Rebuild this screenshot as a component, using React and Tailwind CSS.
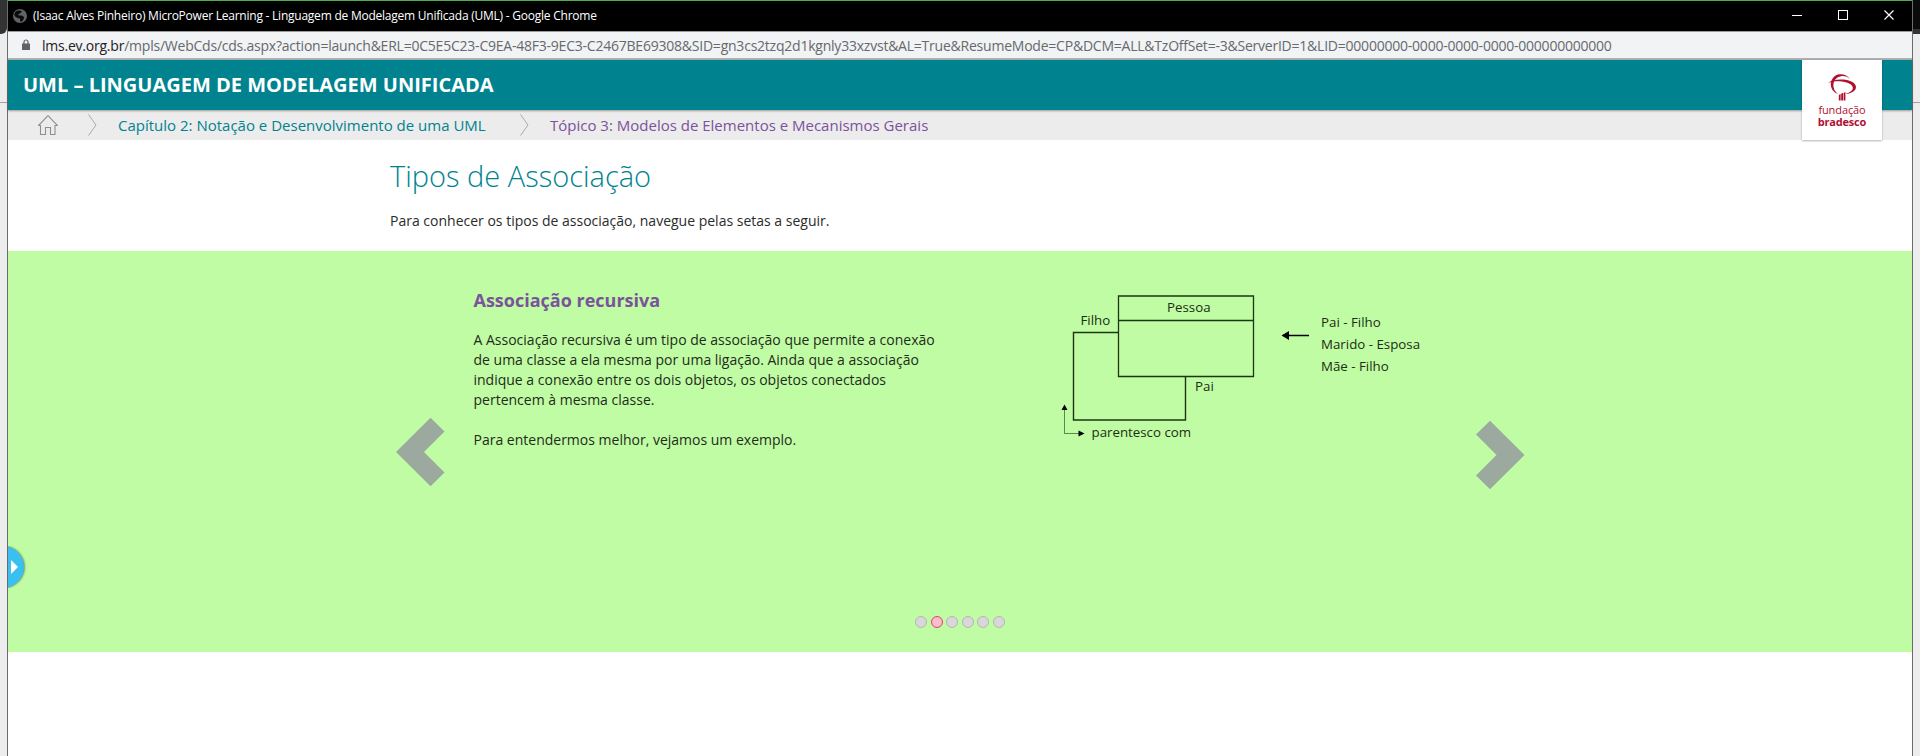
const dots = [0, 1, 2, 3, 4, 5];

function TitleBar() {
  return (
    <div className="flex h-8 items-center border-t border-b border-t-[#4caf50] border-b-[#9a9a9a] bg-black text-white">
      <svg className="ml-[5px] h-[14px] w-[14px] shrink-0" viewBox="0 0 12 12">
        <circle cx="6" cy="6" r="6" fill="#5f6368" />
        <path d="M2 2.500C4 1 7 1 7.500 2.500C6 4 4 4 5 5.500C7 5.500 9 5.500 9.500 7.500C9 10 7.500 11 6 11C6 9 7 8.500 5 8C3 7.500 1.500 6.500 1 5Z" fill="#0b0b0b" />
      </svg>
      <span className="ml-[6px] whitespace-nowrap text-[12px] tracking-[-0.235px]">
        (Isaac Alves Pinheiro) MicroPower Learning - Linguagem de Modelagem Unificada (UML) - Google Chrome
      </span>
      <div className="ml-auto flex">
        <svg className="h-[30px] w-[138px]" viewBox="0 0 138 30" fill="none" stroke="#fff" shapeRendering="crispEdges">
          <path d="M18 14.500H28" />
          <path d="M64.500 9.500H73.500V18.500H64.500Z" />
          <path d="M110.500 9.500L119.500 18.500M119.500 9.500L110.500 18.500" strokeWidth="1.2" shapeRendering="auto" />
        </svg>
      </div>
    </div>
  );
}

function AddressBar() {
  return (
    <div className="flex h-7 items-center border-b-2 border-[#b0b0b0] bg-[#f1f3f4]">
      <svg className="ml-[14px] h-3 w-2 shrink-0" viewBox="0 0 8 12">
        <path d="M0 4.500H8V11H0Z" fill="#5f6368" />
        <path d="M2 5V3A2 2 0 0 1 6 3V5" fill="none" stroke="#5f6368" strokeWidth="1.2" />
      </svg>
      <span className="ml-[12px] whitespace-nowrap text-[14px] tracking-[-0.225px] text-[#66696d]">
        <span className="text-[#202124]">lms.ev.org.br</span>
        /mpls/WebCds/cds.aspx?action=launch&amp;ERL=0C5E5C23-C9EA-48F3-9EC3-C2467BE69308&amp;SID=gn3cs2tzq2d1kgnly33xzvst&amp;AL=True&amp;ResumeMode=CP&amp;DCM=ALL&amp;TzOffSet=-3&amp;ServerID=1&amp;LID=00000000-0000-0000-0000-000000000000
      </span>
    </div>
  );
}

function Separator({ className }) {
  return (
    <svg className={className} viewBox="0 0 10 22" fill="none" stroke="#aaa">
      <path d="M0.500 0.500L8 11L0.500 21.500" />
    </svg>
  );
}

function Logo() {
  return (
    <div className="absolute top-0 right-[30px] flex h-20 w-20 flex-col items-center bg-white pt-[13px] text-[#b01030] shadow-[0_1px_2px_rgba(0,0,0,0.3)]">
      <svg className="h-[28px] w-[28px] shrink-0" viewBox="0 0 28 28" fill="#b01030">
        <path d="M22 6.200C20 2.500 15.500 0.800 11.500 1.200C6.500 1.700 3 6 2.800 11C2.700 15.500 5.500 19.500 10 21C6.800 18.500 5.300 15.500 5.400 12C5.500 7.500 8.500 4 13 3.200C16.500 2.700 20 3.800 22 6.200Z" />
        <path d="M0 10C4 6.800 10 6.200 15 6.600C22 7.200 27.500 9.500 28 14C28 18 23.500 20.300 17.500 21C22 19.500 25 17.500 24.800 14.800C24.500 11 19 9 13.500 8.500C8.500 8 4 8.500 0 10Z" />
        <path d="M10.800 22L12.600 21V27.500H10.800ZM13.200 20.800L15 19.800V27.500H13.200ZM15.600 20L17.400 19V27.500H15.600Z" />
      </svg>
      <span className="mt-[2px] text-[11px] leading-[14px] tracking-[-0.1px]">fundação</span>
      <span className="mt-[-2px] text-[11px] leading-[14px] font-bold tracking-[-0.2px]">bradesco</span>
    </div>
  );
}

function Header() {
  return (
    <header className="relative">
      <div className="relative flex h-[50px] items-center bg-[#00838f] pl-[15px] shadow-[0_1px_2px_rgba(0,0,0,0.35)]">
        <h1 className="text-[20px] font-bold whitespace-nowrap text-white">UML – LINGUAGEM DE MODELAGEM UNIFICADA</h1>
      </div>
      <nav className="flex h-[30px] items-center bg-[#ececec] text-[15px] whitespace-nowrap">
        <svg className="ml-[30px] h-5 w-5 shrink-0" viewBox="0 0 20 20" fill="none" stroke="#8f8f8f" strokeWidth="1.1">
          <path d="M0.500 10.500L10 0.700L19.500 10.500H17V19.500H12.500V12.500H7.500V19.500H2.500V10.500Z" />
        </svg>
        <Separator className="ml-[30px] h-[22px] w-[10px] shrink-0" />
        <span className="ml-[20px] w-[368px] text-[#00838f]">Capítulo 2: Notação e Desenvolvimento de uma UML</span>
        <Separator className="ml-[34px] h-[22px] w-[10px] shrink-0" />
        <span className="ml-[20px] text-[#7b529c]">Tópico 3: Modelos de Elementos e Mecanismos Gerais</span>
      </nav>
      <Logo />
    </header>
  );
}

function Diagram() {
  return (
    <svg className="h-[160px] w-[380px] shrink-0" viewBox="1060 290 380 160" fill="none" stroke="#1c3512" fontFamily="Open Sans, sans-serif" fontSize="13.3">
      <path d="M1118.500 296H1253.500V376.500H1118.500Z" strokeWidth="1.300" />
      <path d="M1118.500 320.500H1253.500" strokeWidth="1.600" />
      <path d="M1118.500 332.500H1073.500V420H1185.500V376.500" strokeWidth="1.400" />
      <path d="M1064.500 408V433.500H1079" strokeWidth="0.600" />
      <path d="M1283 335.500H1309" stroke="#000" strokeWidth="1.500" />
      <g fill="#000" stroke="none">
        <path d="M1281.500 335.500L1289 331V340ZM1064.500 404.500L1067.500 410H1061.500ZM1084.500 433.500L1078.500 430.500V436.500Z" />
      </g>
      <g fill="#1b2e13" stroke="none">
        <text x="1167" y="311.500">Pessoa</text>
        <text x="1080.500" y="325">Filho</text>
        <text x="1195" y="391">Pai</text>
        <text x="1091.500" y="437">parentesco com</text>
        <text x="1321" y="327">Pai - Filho</text>
        <text x="1321" y="349">Marido - Esposa</text>
        <text x="1321" y="371">Mãe - Filho</text>
      </g>
    </svg>
  );
}

function Carousel() {
  return (
    <section className="relative flex h-[401px] flex-col bg-[#c0fca4]">
      <div className="flex h-[350px] items-start pl-[388px]">
        <svg className="mt-[166px] h-[70px] w-[49px] shrink-0" viewBox="0 0 49 70" fill="#9ba99f">
          <path d="M0 35L34.500 0.700L48.500 14.500L28 35L48.500 55.500L34.500 69.300Z" />
        </svg>
        <div className="ml-[28.500px] w-[480.500px] shrink-0 pt-[37px]">
          <h3 className="text-[18px] leading-6 font-bold text-[#7b529c]">Associação recursiva</h3>
          <p className="mt-[18px] text-[14px] leading-5 text-[#1f2b1b]">
            A Associação recursiva é um tipo de associação que permite a conexão<br />
            de uma classe a ela mesma por uma ligação. Ainda que a associação<br />
            indique a conexão entre os dois objetos, os objetos conectados<br />
            pertencem à mesma classe.<br />
            <br />
            Para entendermos melhor, vejamos um exemplo.
          </p>
        </div>
        <div className="ml-[106px] pt-[39px]">
          <Diagram />
        </div>
        <svg className="mt-[169px] ml-[36px] h-[70px] w-[49px] shrink-0" viewBox="0 0 49 70" fill="#9ba99f">
          <path d="M48.500 35L14 0.700L0 14.500L20.500 35L0 55.500L14 69.300Z" />
        </svg>
      </div>
      <div className="flex gap-[3.6px] pt-[15px] pl-[907px]">
        {dots.map((i) => (
          <span key={i} className={i === 1 ? "h-3 w-3 rounded-full border border-[#e0406a] bg-[#fbbccb]" : "h-3 w-3 rounded-full border border-[#b5b5b5] bg-[#d8d8d8]"} />
        ))}
      </div>
      <div className="absolute top-[295px] left-0 h-[42px] w-[28px] overflow-hidden">
        <div className="-ml-[26px] flex h-[42px] w-[42px] items-center rounded-full bg-[#39c0f0] pl-[29px] shadow-[1px_0_2px_rgba(0,0,0,0.4)]">
          <svg className="h-[14px] w-[7px]" viewBox="0 0 7 14" fill="#fff"><path d="M0 0L7 7L0 14Z" /></svg>
        </div>
      </div>
    </section>
  );
}

export default function App() {
  return (
    <div className="flex h-[756px] w-[1920px] overflow-hidden bg-[#ededed] font-['Open_Sans',sans-serif]">
      <div className="w-[7px] shrink-0">
        <div className="h-[34px] rounded-br-md bg-[#333]" />
        <div className="h-[69px] border-b border-[#a0a0a0]" />
      </div>
      <main className="w-[1906px] shrink-0 border-x border-[#6d6d6d] bg-white">
        <TitleBar />
        <AddressBar />
        <Header />
        <div className="h-[111px] pl-[382px]">
          <h2 className="pt-[16px] text-[29px] leading-[40px] font-light text-[#00838f]">Tipos de Associação</h2>
          <p className="mt-[15px] text-[14px] leading-5 text-[#2b2b2b]">Para conhecer os tipos de associação, navegue pelas setas a seguir.</p>
        </div>
        <Carousel />
      </main>
      <div className="w-[7px] shrink-0">
        <div className="h-[34px] border-b-[5px] border-[#333] bg-[#0b0b0b]" />
        <div className="h-[69px] border-b border-[#a0a0a0]" />
      </div>
    </div>
  );
}
